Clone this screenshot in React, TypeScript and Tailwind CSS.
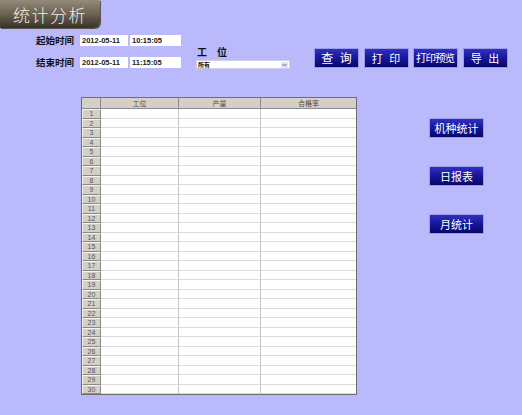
import React from 'react';

const cjk = { fontFamily: '"Noto Sans CJK SC", "Liberation Sans", sans-serif' };

const NavButton: React.FC<{ label: string; className?: string; textClass?: string }> = ({ label, className = '', textClass = 'text-[12px]' }) => (
  <button
    className={`flex items-center justify-center border border-[#9c9ce6] bg-gradient-to-b from-[#3030c0] via-[#16169a] to-[#08086a] text-white leading-none ${textClass} ${className}`}
    style={cjk}
  >
    {label}
  </button>
);

const DateBox: React.FC<{ value: string; width: string }> = ({ value, width }) => (
  <div className={`${width} h-[11px] bg-white flex items-center pl-[2px] text-[7.5px] font-bold text-[#202020] leading-none`} style={{ fontFamily: '"Liberation Sans", sans-serif' }}>
    {value}
  </div>
);

export default function App() {
  const rows = Array.from({ length: 30 }, (_, i) => i + 1);

  return (
    <div className="w-[522px] h-[415px] bg-[#b9b9fc] overflow-hidden" style={cjk}>
      {/* Title tab */}
      <div className="w-[100px] h-[28px] rounded-br-[6px] bg-gradient-to-b from-[#958b7b] via-[#6b6253] to-[#38322a] flex items-center pl-[13px] shadow-[1px_1px_0_#5a5346]">
        <span className="text-[17px] tracking-[1.5px] text-[#f2eee4] leading-none font-light">统计分析</span>
      </div>

      {/* Query form */}
      <div className="flex items-start pl-[36px] pt-[7px] h-[69px]">
        <div className="flex flex-col gap-[11px]">
          <div className="flex items-center h-[11px]">
            <span className="w-[44px] text-[9.5px] font-bold text-[#101010] leading-none">起始时间</span>
            <DateBox value="2012-05-11" width="w-[48px]" />
            <div className="w-[2px]" />
            <DateBox value="10:15:05" width="w-[51px]" />
          </div>
          <div className="flex items-center h-[11px]">
            <span className="w-[44px] text-[9.5px] font-bold text-[#101010] leading-none">结束时间</span>
            <DateBox value="2012-05-11" width="w-[48px]" />
            <div className="w-[2px]" />
            <DateBox value="11:15:05" width="w-[51px]" />
          </div>
        </div>

        <div className="ml-[15px] mt-[12px] flex flex-col">
          <span className="h-[10px] pl-[1px] text-[10px] font-bold text-[#101010] leading-none tracking-[10px]">工位</span>
          <div className="mt-[3px] w-[94px] h-[9px] bg-white border border-[#d0d0e8] flex items-center justify-between pl-[1px] pr-[1px]">
            <span className="text-[6px] font-bold text-[#101010] leading-none">所有</span>
            <svg width="7" height="6" viewBox="0 0 7 6">
              <rect width="7" height="6" fill="#dfe6f6" />
              <path d="M1.5 2 L3.5 4 L5.5 2" stroke="#4b5e9c" strokeWidth="1" fill="none" />
            </svg>
          </div>
        </div>

        <div className="ml-[24px] mt-[13px] flex gap-[4.5px]">
          <NavButton label="查 询" className="w-[45px] h-[20px] tracking-[2px] pl-[2px]" textClass="text-[12px]" />
          <NavButton label="打 印" className="w-[45px] h-[20px] tracking-[2px] pl-[2px]" textClass="text-[11px]" />
          <NavButton label="打印预览" className="w-[45px] h-[20px] tracking-[-1px] pr-[1px]" textClass="text-[10.5px]" />
          <NavButton label="导 出" className="w-[45px] h-[20px] tracking-[2px] pl-[2px]" textClass="text-[11px]" />
        </div>
      </div>

      {/* Main area */}
      <div className="flex items-start pl-[81px]">
        <div className="w-[276px] border border-[#6e6e6e] bg-white">
          <div className="grid grid-cols-[19px_78px_82px_1fr] h-[11px] bg-[#d4d0c8] border-b border-[#8a8a8a] text-[7px] text-[#4a4a4a] leading-none">
            <div className="border-r border-[#8a8a8a]" />
            <div className="border-r border-[#8a8a8a] flex items-center justify-center">工位</div>
            <div className="border-r border-[#8a8a8a] flex items-center justify-center">产量</div>
            <div className="flex items-center justify-center">合格率</div>
          </div>
          {rows.map((n) => (
            <div key={n} className="grid grid-cols-[19px_78px_82px_1fr] h-[9.5px] leading-none">
              <div className="bg-[#d4d0c8] border-t border-l border-t-[#f4f2ee] border-l-[#f4f2ee] border-b border-r border-b-[#8a8a8a] border-r-[#8a8a8a] flex items-center justify-center text-[7px] text-[#555] font-['Liberation_Sans',sans-serif]">
                {n}
              </div>
              <div className="border-r border-b border-r-[#c4c4c4] border-b-[#dcdcdc]" />
              <div className="border-r border-b border-r-[#c4c4c4] border-b-[#dcdcdc]" />
              <div className="border-b border-b-[#dcdcdc]" />
            </div>
          ))}
        </div>

        <div className="ml-[72px] pt-[21px] flex flex-col gap-[28px]">
          <NavButton label="机种统计" className="w-[55px] h-[20px]" textClass="text-[11px]" />
          <NavButton label="日报表" className="w-[55px] h-[20px]" textClass="text-[11px]" />
          <NavButton label="月统计" className="w-[55px] h-[20px]" textClass="text-[11px]" />
        </div>
      </div>
    </div>
  );
}
